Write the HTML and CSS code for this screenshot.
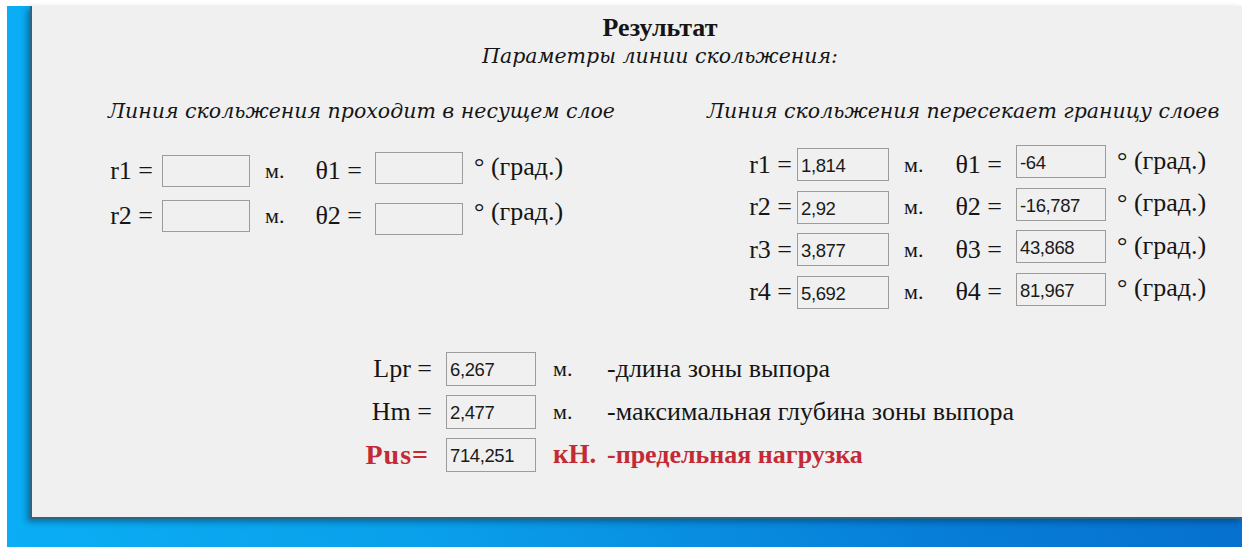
FILE: index.html
```html
<!DOCTYPE html>
<html lang="ru">
<head>
<meta charset="utf-8">
<title>Результат</title>
<link rel="stylesheet" href="styles.css">
</head>
<body>
<div class="desk">
  <div class="window">
    <header class="head">
      <h1 class="title">Результат</h1>
      <p class="subtitle">Параметры линии скольжения:</p>
    </header>

    <div class="cases">
      <section class="case case-left">
        <h2 class="case-title">Линия скольжения проходит в несущем слое</h2>
        <div class="grid grid-left">
          <span class="lbl">r1 =</span><span class="box"></span><span class="unit">м.</span>
          <span class="lbl lbl-theta">θ1 =</span><span class="box box-theta"></span><span class="deg">° (град.)</span>

          <span class="lbl">r2 =</span><span class="box"></span><span class="unit">м.</span>
          <span class="lbl lbl-theta">θ2 =</span><span class="box box-theta box-low"></span><span class="deg">° (град.)</span>
        </div>
      </section>

      <section class="case case-right">
        <h2 class="case-title">Линия скольжения пересекает границу слоев</h2>
        <div class="grid grid-right">
          <span class="lbl">r1 =</span><span class="box">1,814</span><span class="unit">м.</span>
          <span class="lbl lbl-theta">θ1 =</span><span class="box box-theta">-64</span><span class="deg">° (град.)</span>

          <span class="lbl">r2 =</span><span class="box">2,92</span><span class="unit">м.</span>
          <span class="lbl lbl-theta">θ2 =</span><span class="box box-theta">-16,787</span><span class="deg">° (град.)</span>

          <span class="lbl">r3 =</span><span class="box">3,877</span><span class="unit">м.</span>
          <span class="lbl lbl-theta">θ3 =</span><span class="box box-theta">43,868</span><span class="deg">° (град.)</span>

          <span class="lbl">r4 =</span><span class="box">5,692</span><span class="unit">м.</span>
          <span class="lbl lbl-theta">θ4 =</span><span class="box box-theta">81,967</span><span class="deg">° (град.)</span>
        </div>
      </section>
    </div>

    <div class="summary">
      <span class="lbl">Lpr =</span><span class="box">6,267</span><span class="unit">м.</span><span class="desc">-длина зоны выпора</span>
      <span class="lbl">Hm =</span><span class="box">2,477</span><span class="unit">м.</span><span class="desc">-максимальная глубина зоны выпора</span>
      <span class="lbl accent accent-lbl">Pus=</span><span class="box">714,251</span><span class="unit accent accent-unit">кН.</span><span class="desc accent">-предельная нагрузка</span>
    </div>
  </div>
</div>
</body>
</html>
```

FILE: styles.css
```css
html, body {
  margin: 0;
  padding: 0;
  background: #ffffff;
  width: 1242px;
  height: 547px;
  overflow: hidden;
}

/* desktop wallpaper behind the dialog */
.desk {
  margin: 6px 0 0 7px;
  height: 541px;
  box-sizing: border-box;
  padding: 0 0 26px 23px;
  background: linear-gradient(90deg, #0aaef4 0%, #0a9fea 35%, #077ed8 75%, #0671cf 100%);
}

.window {
  height: 513px;
  box-sizing: border-box;
  background: #f0f0f0;
  border-left: 2px solid #2f6580;
  border-bottom: 2px solid #2f6580;
  box-shadow: -3px 3px 6px rgba(0, 40, 70, 0.45);
  color: #151515;
  font-family: "Liberation Serif", "Times New Roman", serif;
}

.head {
  text-align: center;
  padding: 7px 0 0 46px;
}

.title {
  margin: 0;
  font-size: 26px;
  line-height: 29px;
  font-weight: bold;
}

.subtitle {
  margin: 0;
  font-family: "DejaVu Serif", serif;
  font-style: italic;
  font-size: 20.5px;
  line-height: 28px;
}

.cases {
  display: flex;
  padding: 29px 0 0 76px;
}

.case-left { width: 599px; }
.case-right { flex: 1; }

.case-title {
  margin: 0;
  font-family: "DejaVu Serif", serif;
  font-style: italic;
  font-weight: normal;
  font-size: 20.5px;
  line-height: 24px;
  white-space: nowrap;
}

.grid {
  display: grid;
  align-items: center;
  font-size: 26px;
}

.grid-left {
  grid-template-columns: 54px 88px 64px 61px 88px auto;
  grid-auto-rows: 32px;
  row-gap: 13px;
  margin-top: 32px;
}

.grid-right {
  grid-template-columns: 90px 92px 64px 63px 90px auto;
  grid-auto-rows: 33px;
  row-gap: 9.5px;
  margin-top: 25px;
}

.lbl {
  text-align: right;
  padding-right: 9px;
  white-space: nowrap;
}

.grid-right .lbl { padding-right: 5px; }
.lbl-theta { padding-right: 13px; }
.grid-right .lbl-theta { padding-right: 14px; }

.box {
  height: 100%;
  box-sizing: border-box;
  border: 1px solid #9c9c9c;
  background: #f0f0f0;
  font-family: "Liberation Sans", Arial, sans-serif;
  font-size: 18.5px;
  letter-spacing: -0.4px;
  line-height: 30px;
  padding: 2px 0 0 3px;
  color: #1a1a1a;
}

.box-theta { margin-bottom: 6px; }
.grid-left .box-low { margin: 6px 0 0; }

.unit {
  padding-left: 15px;
  font-size: 22px;
}

.deg {
  padding-left: 11px;
  white-space: nowrap;
  margin-bottom: 8px;
}

.summary {
  display: grid;
  grid-template-columns: 100px 90px 71px auto;
  grid-auto-rows: 34px;
  row-gap: 9px;
  align-items: center;
  margin: 43px 0 0 314px;
  font-size: 26px;
}

.summary .lbl { padding-right: 14px; }
.summary .unit { padding-left: 17px; }
.summary .desc { white-space: nowrap; }

.accent {
  color: #c42a35;
  font-weight: bold;
}

.summary .accent-lbl {
  font-size: 28px;
  letter-spacing: 1px;
  padding-right: 17px;
}

.summary .accent-unit {
  font-size: 27px;
}
```
